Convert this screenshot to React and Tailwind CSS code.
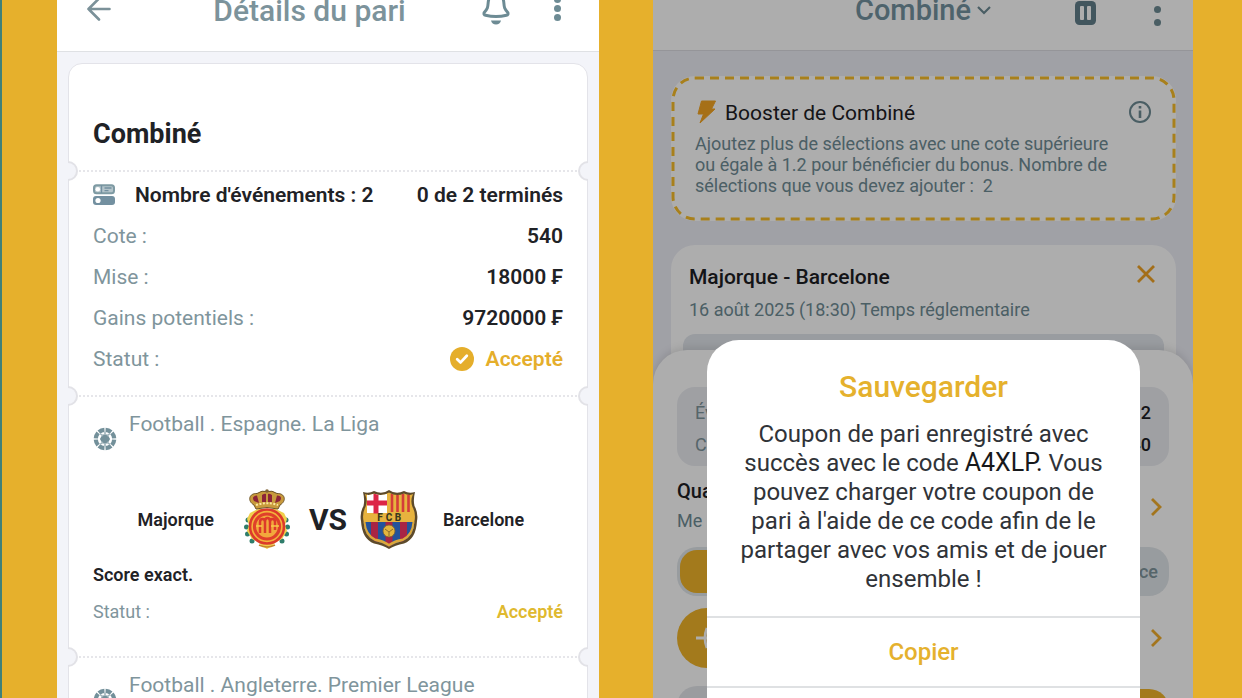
import React from "react";

function Dots({ gap }) {
  return (
    <span className={`flex flex-col items-center ${gap}`}>
      <span className="size-[7px] rounded-full bg-[#6d8b94]" />
      <span className="size-[7px] rounded-full bg-[#6d8b94]" />
      <span className="size-[7px] rounded-full bg-[#6d8b94]" />
    </span>
  );
}

function ArrowLeft() {
  return (
    <svg className="h-6 w-6" viewBox="0 0 24 24" fill="none" stroke="#7b9199" strokeWidth="2.6" strokeLinecap="round" strokeLinejoin="round">
      <path d="M22.500 12H1.500M12 1.500L1.500 12L12 22.500" />
    </svg>
  );
}

function Bell() {
  return (
    <svg className="h-9 w-7" viewBox="0 0 28 36" fill="none" stroke="#6d8b94" strokeWidth="3" strokeLinejoin="round" strokeLinecap="round">
      <path d="M14 5C9 5 6.600 8.500 6.200 13.500C5.800 18.500 5.600 20 2.200 23.500Q1.400 26 3.500 26.300Q14 28.800 24.500 26.300Q26.600 26 25.800 23.500C22.400 20 22.200 18.500 21.800 13.500C21.400 8.500 19 5 14 5Z" />
      <path d="M9 31.500H19Q18 35.500 14 35.500T9 31.500Z" fill="#6d8b94" stroke="none" />
    </svg>
  );
}

function SlipIcon() {
  return (
    <svg className="h-[21px] w-[22px]" viewBox="0 0 22 21" fill="none">
      <rect x="1" y="1.200" width="20" height="8" rx="2.500" fill="#b4c4ca" stroke="#7e9aa3" strokeWidth="2" />
      <path d="M8.500 1v8M11.500 4h7M11.500 6.600h4" stroke="#7390a0" strokeWidth="1.400" />
      <circle cx="4.800" cy="5.200" r="2.300" fill="#fff" />
      <rect x="0" y="12" width="22" height="9" rx="3" fill="#7390a0" />
      <circle cx="5" cy="16.500" r="2.600" fill="#fff" />
    </svg>
  );
}

function BallIcon() {
  return (
    <svg className="h-6 w-6" viewBox="0 0 24 24" fill="none">
      <circle cx="12" cy="12" r="9.200" stroke="#73909a" strokeWidth="4.200" pathLength="8" strokeDasharray=".84 .16" strokeDashoffset="-.08" />
      <path d="M9.500 7.600h5l2.600 4.400l-2.600 4.400h-5L6.900 12Z" fill="#73909a" />
      <path d="M12 5V8M12 16v3M7 6.500L10 9M14 15l3 2.500M17 6.500L14 9M10 15l-3 2.500" stroke="#9fb3ba" strokeWidth="1.600" />
    </svg>
  );
}

function CheckBadge() {
  return (
    <svg className="size-6" viewBox="0 0 24 24" fill="none">
      <circle cx="12" cy="12" r="12" fill="#e5ae2b" />
      <path d="M7.200 12.200l3.400 3.200l6.200-6.600" stroke="#fff" strokeWidth="2.800" strokeLinecap="round" strokeLinejoin="round" />
    </svg>
  );
}

function MallorcaCrest() {
  return (
    <svg className="h-[60px] w-[46px]" viewBox="0 0 46 60" fill="none">
      <g fill="#2f7d6b">
        <circle cx="4" cy="31" r="2.500" /><circle cx="2.500" cy="38" r="2.500" /><circle cx="3.500" cy="45" r="2.500" /><circle cx="8" cy="52" r="2.500" />
        <circle cx="42" cy="31" r="2.500" /><circle cx="43.500" cy="38" r="2.500" /><circle cx="42.500" cy="45" r="2.500" /><circle cx="38" cy="52" r="2.500" />
      </g>
      <path d="M6 24Q12 21 14 20H32Q34 21 40 24L43 30L41 36L43 42L38 50L32 53L28 57L23 60L18 57L14 53L8 50L3 42L5 36L3 30Z" fill="#f0cf4c" />
      <path d="M10 16C3 12 5 4 13 4.500Q18 1 23 2.500Q28 1 33 4.500C41 4 43 12 36 16L34 20Q23 17 12 20Z" fill="#c89a3c" stroke="#6d5326" strokeWidth="1" />
      <path d="M10 12Q7 7 13 6.500L15 14ZM18 13L18 6Q21 4 22 5V13ZM28 13V6Q25 4 24 5V13ZM36 12Q39 7 33 6.500L31 14Z" fill="#8c2438" />
      <path d="M12 16Q23 12.500 34 16" stroke="#fae9a0" strokeWidth="2" strokeDasharray="2 1.500" />
      <circle cx="23" cy="2" r="1.800" fill="#806234" />
      <circle cx="23" cy="37.500" r="17" fill="#f3b23b" stroke="#dc3a2b" strokeWidth="2.600" />
      <circle cx="23" cy="37.500" r="12.500" fill="#f2a83c" stroke="#e0402a" strokeWidth="3.200" />
      <path d="M16 44V33Q16 30 18.500 30T21 33V44M21 33Q21 29 23.500 29T26 33V44M26 33Q26 30 28.500 30T31 33V41" stroke="#dd3a2a" strokeWidth="2.500" />
      <path d="M12 37H18M27 37H35" stroke="#f9c84a" strokeWidth="1.400" />
      <path d="M15 56Q23 60 31 56" stroke="#c7862c" strokeWidth="1.500" />
    </svg>
  );
}

function BarcaCrest() {
  return (
    <svg className="h-[60px] w-[58px]" viewBox="0 0 58 60">
      <defs>
        <clipPath id="barca-shield">
          <path d="M5 5Q9 7 14 4.500Q22 8 29 3.500Q36 8 44 4.500Q49 7 53 5Q50 12 52.500 18Q56 24 54.500 32Q54 47 43 52Q35 53.500 29 57.500Q23 53.500 15 52Q4 47 3.500 32Q2 24 5.500 18Q8 12 5 5Z" />
        </clipPath>
      </defs>
      <path d="M3 3Q9 5 14 2Q22 6 29 1Q36 6 44 2Q49 5 55 3Q53 11 54.500 17Q58.500 24 57 32Q56 50 44 54.500Q35 56 29 60Q23 56 14 54.500Q2 50 1 32Q-.5 24 3.500 17Q5 11 3 3Z" fill="#5d4a2b" />
      <g clipPath="url(#barca-shield)">
        <rect width="58" height="60" fill="#e7b33e" />
        <rect x="7" y="5" width="20" height="19" fill="#fff" />
        <path d="M13.500 5h5v6.500H27v5h-8.500v8h-5v-8H7v-5h6.500Z" fill="#dc2546" />
        <path d="M32 5v18M37.500 5v18M43 5v18M48.500 5v18" stroke="#d43c39" strokeWidth="2.600" />
        <rect y="33" width="58" height="27" fill="#24539b" />
        <path d="M14.500 33v27M29 33v27M43.500 33v27" stroke="#a82545" strokeWidth="7" />
        <path d="M4 33Q5 46 15 51Q23 52 29 56.500Q35 52 43 51Q53 46 54 33" fill="none" stroke="#dca83a" strokeWidth="3" />
        <circle cx="29" cy="42" r="6" fill="#e4b53d" stroke="#7e632c" strokeWidth=".8" />
        <path d="M25 40l4 3l4-3M29 43v4" stroke="#8a6b2c" strokeWidth="1" fill="none" />
      </g>
      <text x="20" y="32" textAnchor="middle" fontFamily="Roboto, sans-serif" fontWeight="800" fontSize="10" fill="#3b3a1d">F</text>
      <text x="29" y="32" textAnchor="middle" fontFamily="Roboto, sans-serif" fontWeight="800" fontSize="10" fill="#3b3a1d">C</text>
      <text x="38" y="32" textAnchor="middle" fontFamily="Roboto, sans-serif" fontWeight="800" fontSize="10" fill="#3b3a1d">B</text>
    </svg>
  );
}

function Divider() {
  return (
    <div className="relative flex h-0 items-center px-[10px]">
      <span className="absolute -top-[10px] -left-px h-5 w-[10px] rounded-r-full border-2 border-l-0 border-[#e2e2e7] bg-[#f3f4f9]" />
      <span className="w-full border-t-2 border-dotted border-[#e6e6ea]" />
      <span className="absolute -top-[10px] -right-px h-5 w-[10px] rounded-l-full border-2 border-r-0 border-[#e2e2e7] bg-[#f3f4f9]" />
    </div>
  );
}

function Row({ label, children }) {
  return (
    <div className="flex h-[41px] items-center justify-between">
      <dt className="text-[#7f959c]">{label}</dt>
      <dd className="flex items-center gap-3 font-semibold text-[#1f2226]">{children}</dd>
    </div>
  );
}

function League({ children }) {
  return (
    <div className="flex items-start gap-3">
      <span className="pt-[15px]"><BallIcon /></span>
      <span className="text-[21px] leading-6 text-[#7f959c]">{children}</span>
    </div>
  );
}

function BetDetails() {
  return (
    <section className="flex min-w-0 flex-col overflow-hidden bg-[#f3f4f9]">
      <header className="flex h-[52px] shrink-0 items-center border-b border-[#dfe1e4] bg-white px-[30px] pb-[30px]">
        <button type="button" aria-label="Retour" className="mr-[26px] pb-[3px]"><ArrowLeft /></button>
        <h1 className="flex-1 text-center text-[30px] leading-8 font-medium text-[#7c939b]">Détails du pari</h1>
        <button type="button" aria-label="Notifications" className="pb-[8px]"><Bell /></button>
        <button type="button" aria-label="Menu" className="ml-[44px] pr-[8px] pb-[4px]"><Dots gap="gap-[2px]" /></button>
      </header>
      <article className="mx-[11px] mt-[11px] rounded-t-[14px] border border-[#e3e3e9] bg-white">
        <h2 className="flex h-[107px] items-end px-6 pb-[21px] text-[27px] leading-8 font-bold text-[#1f2226]">Combiné</h2>
        <Divider />
        <div className="h-[225px] px-6 pt-[3px] text-[21px] leading-6">
          <div className="flex h-[41px] items-center font-semibold text-[#1f2226]">
            <SlipIcon />
            <span className="ml-5">Nombre d'événements : 2</span>
            <span className="ml-auto">0 de 2 terminés</span>
          </div>
          <dl>
            <Row label="Cote :">540</Row>
            <Row label="Mise :">18000 ₣</Row>
            <Row label="Gains potentiels :">9720000 ₣</Row>
            <Row label="Statut :">
              <CheckBadge />
              <span className="text-[#e5ae2b]">Accepté</span>
            </Row>
          </dl>
        </div>
        <Divider />
        <div className="h-[261px] px-6 pt-4">
          <League>Football . Espagne. La Liga</League>
          <div className="mt-[38px] grid grid-cols-[1fr_auto_1fr] items-center gap-[13px] text-[18px] font-semibold text-[#1f2226]">
            <div className="flex items-center justify-end gap-6">
              <span>Majorque</span>
              <span className="flex w-[58px] justify-center"><MallorcaCrest /></span>
            </div>
            <span className="pt-[2px] text-[30px] leading-8 font-bold">VS</span>
            <div className="flex items-center gap-[25px]">
              <BarcaCrest />
              <span>Barcelone</span>
            </div>
          </div>
          <p className="mt-[14px] text-[18px] leading-6 font-semibold text-[#1f2226]">Score exact.</p>
          <div className="mt-[13px] flex justify-between text-[18px] leading-6">
            <span className="text-[#7f959c]">Statut :</span>
            <span className="font-semibold text-[#dfb92f]">Accepté</span>
          </div>
        </div>
        <Divider />
        <div className="px-6 pt-4">
          <League>Football . Angleterre. Premier League</League>
        </div>
      </article>
    </section>
  );
}

function Chevron() {
  return (
    <svg className="h-5 w-3" viewBox="0 0 12 20" fill="none" stroke="#f0ad2c" strokeWidth="2.800">
      <path d="M2 2l8 8l-8 8" />
    </svg>
  );
}

function Booster() {
  return (
    <section className="relative rounded-3xl bg-white pt-6 pr-6 pb-[25px] pl-6">
      <svg className="absolute inset-0 h-full w-full" fill="none" aria-hidden="true">
        <rect x="2" y="2" rx="22" className="h-[calc(100%-4px)] w-[calc(100%-4px)]" stroke="#f8bd2a" strokeWidth="3" strokeDasharray="9 6" />
      </svg>
      <div className="flex items-center">
        <svg className="h-6 w-[22px]" viewBox="0 0 22 24" fill="#f5a623">
          <path d="M6.500 1H20.500L16.500 9H20L5 23L8.500 14H3Z" stroke="#f5a623" strokeLinejoin="round" />
        </svg>
        <h2 className="ml-2 pt-[2px] text-[21px] leading-[22px] text-[#1d2024]">Booster de Combiné</h2>
        <button type="button" aria-label="Informations" className="ml-auto">
          <svg className="size-6" viewBox="0 0 24 24" fill="none" stroke="#6d8b94" strokeWidth="2">
            <circle cx="12" cy="12" r="10" />
            <path d="M12 10.500V18M12 6v2.500" strokeWidth="2.600" />
          </svg>
        </button>
      </div>
      <p className="mt-[9px] pr-8 text-[18px] leading-[21px] text-[#6f8c95]">
        Ajoutez plus de sélections avec une cote supérieure ou égale à 1.2 pour bénéficier du bonus. Nombre de sélections que vous devez ajouter :&nbsp; 2
      </p>
    </section>
  );
}

function Coupon() {
  return (
    <section className="relative flex min-w-0 flex-col overflow-hidden bg-[#ecedf5]">
      <header className="grid h-[51px] shrink-0 grid-cols-[1fr_auto_1fr] grid-rows-[20px] items-center border-b border-[#dcdce2] bg-white px-[32px]">
        <span />
        <button type="button" className="flex items-center gap-[6px]">
          <span className="text-[29px] leading-8 font-medium text-[#7393a0]">Combiné</span>
          <svg className="h-[10px] w-[14px]" viewBox="0 0 14 10" fill="none" stroke="#6d8b94" strokeWidth="2.200"><path d="M1 2l6 6l6-6" /></svg>
        </button>
        <span className="flex items-center justify-end gap-[58px]">
          <button type="button" aria-label="Pause" className="pt-[6px]">
            <svg className="h-6 w-[21px]" viewBox="0 0 21 24">
              <rect width="21" height="24" rx="4.500" fill="#627f8b" />
              <rect x="5" y="5" width="4" height="14" rx="1" fill="#fff" />
              <rect x="12" y="5" width="4" height="14" rx="1" fill="#fff" />
            </svg>
          </button>
          <button type="button" aria-label="Menu" className="pb-[2px]"><Dots gap="gap-[6px]" /></button>
        </span>
      </header>
      <div className="pt-[25px] pr-[17px] pl-[18px]">
        <Booster />
        <section className="mt-6 h-[137px] overflow-hidden rounded-t-3xl bg-white px-3 pt-5">
          <div className="flex items-start justify-between px-[6px]">
            <h2 className="text-[21px] leading-6 font-medium text-[#1d2024]">Majorque - Barcelone</h2>
            <button type="button" aria-label="Supprimer" className="pr-[3px]">
              <svg className="size-[18px]" viewBox="0 0 18 18" stroke="#f0a326" strokeWidth="2.800"><path d="M1 1l16 16M17 1L1 17" /></svg>
            </button>
          </div>
          <p className="mt-[9px] px-[6px] text-[18px] leading-6 text-[#6f8c95]">16 août 2025 (18:30) Temps réglementaire</p>
          <div className="mt-3 h-12 rounded-xl bg-[#e2e6ec]" />
        </section>
      </div>
      <div className="relative -mt-8 flex-1 rounded-t-[34px] bg-white px-6 pt-[37px] shadow-[0_-2px_8px_rgba(0,0,0,0.12)]">
        <dl className="h-[79px] rounded-[18px] bg-[#eaecf1] px-[18px] pt-[9px] text-[18px]">
          <div className="flex h-8 items-center justify-between"><dt className="text-[#7f959c]">Événements</dt><dd className="font-medium text-[#1d2024]">2</dd></div>
          <div className="flex h-8 items-center justify-between"><dt className="text-[#7f959c]">Cote</dt><dd className="font-medium text-[#1d2024]">540</dd></div>
        </dl>
        <button type="button" className="mt-[11px] flex w-full items-center justify-between pr-[7px] text-left">
          <span className="flex flex-col">
            <span className="text-[20px] leading-7 font-medium text-[#1d2024]">Quand</span>
            <span className="text-[18px] leading-8 text-[#6f8c95]">Me</span>
          </span>
          <Chevron />
        </button>
        <div className="mt-[10px] flex h-[49px] items-center justify-between rounded-[20px] bg-[#e1e6ea] p-[3px]">
          <button type="button" aria-label="Simple" className="h-[43px] w-1/3 rounded-[17px] bg-[#f0b42a]" />
          <button type="button" className="pr-[8px] text-[18px] font-medium text-[#7f959c]">ce</button>
        </div>
        <button type="button" aria-label="Ajouter" className="mt-3 flex w-full items-center justify-between pr-[7px]">
          <svg className="size-[60px]" viewBox="0 0 60 60" fill="none" stroke="#fff" strokeWidth="2.800">
            <circle cx="30" cy="30" r="30" fill="#f0b42a" stroke="none" />
            <path d="M19 30h14M30 20q-4 10 0 20" />
          </svg>
          <Chevron />
        </button>
        <div className="mt-[18px] flex h-[50px] justify-between">
          <span className="w-1/3 rounded-[20px] bg-[#e4e6eb]" />
          <button type="button" aria-label="Parier" className="mt-[3px] w-1/3 rounded-[20px] bg-[#f0b42a]" />
        </div>
      </div>
      <div className="absolute inset-0 flex flex-col bg-black/32 pt-[340px] pr-[53px] pl-[54px]">
        <div role="dialog" aria-label="Sauvegarder" className="shrink-0 rounded-[32px] bg-white pt-[31px] text-center">
          <h2 className="text-[30px] leading-8 font-medium text-[#e5b12d]">Sauvegarder</h2>
          <p className="mt-[17px] px-7 text-[24px] leading-[29px] text-[#303338]">
            Coupon de pari enregistré avec succès avec le code <span className="text-[25px] leading-none text-[#17191c]">A4XLP.</span> Vous pouvez charger votre coupon de pari à l'aide de ce code afin de le partager avec vos amis et de jouer ensemble !
          </p>
          <button type="button" className="mt-[22px] h-[70px] w-full border-t-2 border-[#dfe1e3] text-[24px] font-medium text-[#e5b12d]">Copier</button>
          <button type="button" aria-label="Fermer" className="h-[70px] w-full border-t-2 border-[#dfe1e3]" />
        </div>
      </div>
    </section>
  );
}

export default function App() {
  return (
    <main className="grid h-screen grid-cols-[542fr_540fr] grid-rows-1 gap-[54px] overflow-hidden border-l-2 border-[#3f8079] bg-[#e6b02c] pr-[49px] pl-[55px] font-['Roboto',sans-serif]">
      <BetDetails />
      <Coupon />
    </main>
  );
}
